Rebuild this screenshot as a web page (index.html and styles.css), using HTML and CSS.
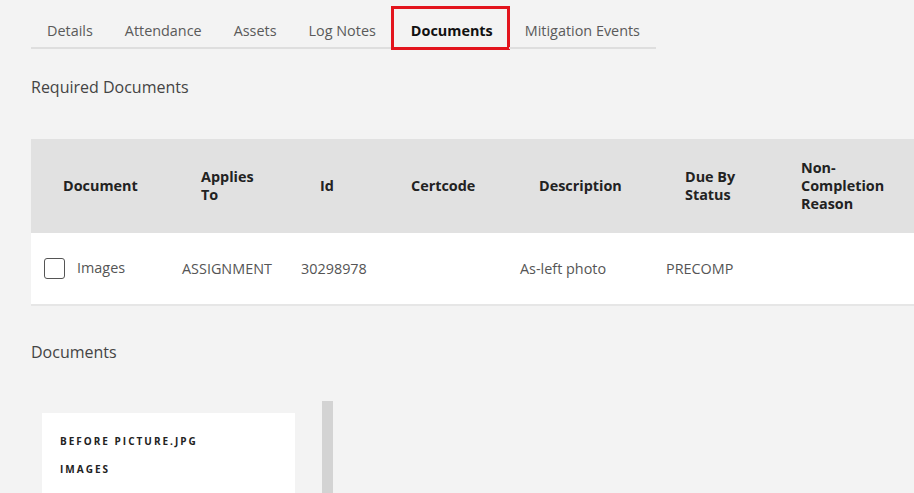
FILE: index.html
```html
<!DOCTYPE html>
<html>
<head>
<meta charset="utf-8">
<link rel="stylesheet" href="styles.css">
</head>
<body>
<div class="page">
  <nav class="tabs">
    <div class="tab">Details</div>
    <div class="tab">Attendance</div>
    <div class="tab">Assets</div>
    <div class="tab">Log Notes</div>
    <div class="tab active">Documents</div>
    <div class="tab">Mitigation Events</div>
  </nav>

  <h2 class="section-title req">Required Documents</h2>

  <div class="table-wrap">
    <table class="req-table">
      <colgroup>
        <col style="width:138px">
        <col style="width:119px">
        <col style="width:91px">
        <col style="width:128px">
        <col style="width:146px">
        <col style="width:116px">
        <col style="width:150px">
        <col style="width:150px">
      </colgroup>
      <thead>
        <tr>
          <th>Document</th>
          <th>Applies<br>To</th>
          <th>Id</th>
          <th>Certcode</th>
          <th>Description</th>
          <th>Due By<br>Status</th>
          <th>Non-<br>Completion<br>Reason</th>
          <th></th>
        </tr>
      </thead>
      <tbody>
        <tr>
          <td><div class="doc-cell"><span class="checkbox"></span><span class="doc-name">Images</span></div></td>
          <td>ASSIGNMENT</td>
          <td>30298978</td>
          <td></td>
          <td>As-left photo</td>
          <td>PRECOMP</td>
          <td></td>
          <td></td>
        </tr>
      </tbody>
    </table>
  </div>

  <h2 class="section-title docs">Documents</h2>

  <div class="doc-area">
    <div class="card">
      <div class="card-line">BEFORE PICTURE.JPG</div>
      <div class="card-line">IMAGES</div>
    </div>
    <div class="scrollbar"></div>
  </div>
</div>
</body>
</html>
```

FILE: styles.css
```css
html, body {
  margin: 0;
  padding: 0;
  background: #f3f3f3;
  overflow: hidden;
}
body {
  font-family: "Open Sans", "Liberation Sans", sans-serif;
  color: #444;
  width: 914px;
  height: 493px;
}
.page {
  padding: 8px 0 0 31px;
}
.tabs {
  display: flex;
  gap: 0;
}
.tab {
  height: 39px;
  line-height: 45px;
  padding: 0 16px;
  font-size: 14.4px;
  color: #5a5a5a;
  border-bottom: 2px solid #dedede;
  box-shadow: inset -1px 0 0 #f3f3f3;
}
.tab.active {
  color: #111;
  font-weight: 700;
  outline: 3px solid #e3141d;
  outline-offset: -2px;
  padding: 0 16px 0 19px;
  margin-top: -1px;
  height: 40px;
  line-height: 47px;
  box-shadow: none;
}
.section-title {
  margin: 0;
  font-weight: 400;
  font-size: 16px;
  color: #444;
}
.section-title.req {
  margin-top: 26px;
  line-height: 24px;
}
.table-wrap {
  margin-top: 40px;
  overflow: hidden;
}
.req-table {
  border-collapse: collapse;
  table-layout: fixed;
  width: 1038px;
}
.req-table th {
  background: #e1e1e1;
  height: 94px;
  padding: 0 0 0 32px;
  text-align: left;
  font-size: 14.4px;
  font-weight: 700;
  line-height: 18px;
  color: #222;
  vertical-align: middle;
}
.req-table td {
  background: #fff;
  height: 71px;
  padding: 0 0 0 13px;
  font-size: 14.4px;
  color: #555;
  vertical-align: middle;
  border-bottom: 2px solid #e6e6e6;
  white-space: nowrap;
}
.doc-cell {
  display: flex;
  align-items: center;
  gap: 12px;
}
.checkbox {
  width: 19px;
  height: 19px;
  border: 1.5px solid #555;
  border-radius: 3px;
  background: #fff;
  flex: none;
}
.doc-name {
  margin-top: -3px;
}
.section-title.docs {
  margin-top: 34px;
  line-height: 24px;
}
.doc-area {
  display: flex;
  align-items: flex-start;
  margin-top: 37px;
  padding-left: 11px;
}
.card {
  width: 235px;
  height: 100px;
  background: #fff;
  margin-top: 12px;
  padding: 21px 0 0 18px;
}
.card-line {
  font-size: 10px;
  font-weight: 700;
  letter-spacing: 2px;
  color: #222;
  line-height: 14px;
  margin-bottom: 14px;
}
.scrollbar {
  width: 11px;
  height: 100px;
  background: #d3d3d3;
  margin-left: 27px;
}
```
